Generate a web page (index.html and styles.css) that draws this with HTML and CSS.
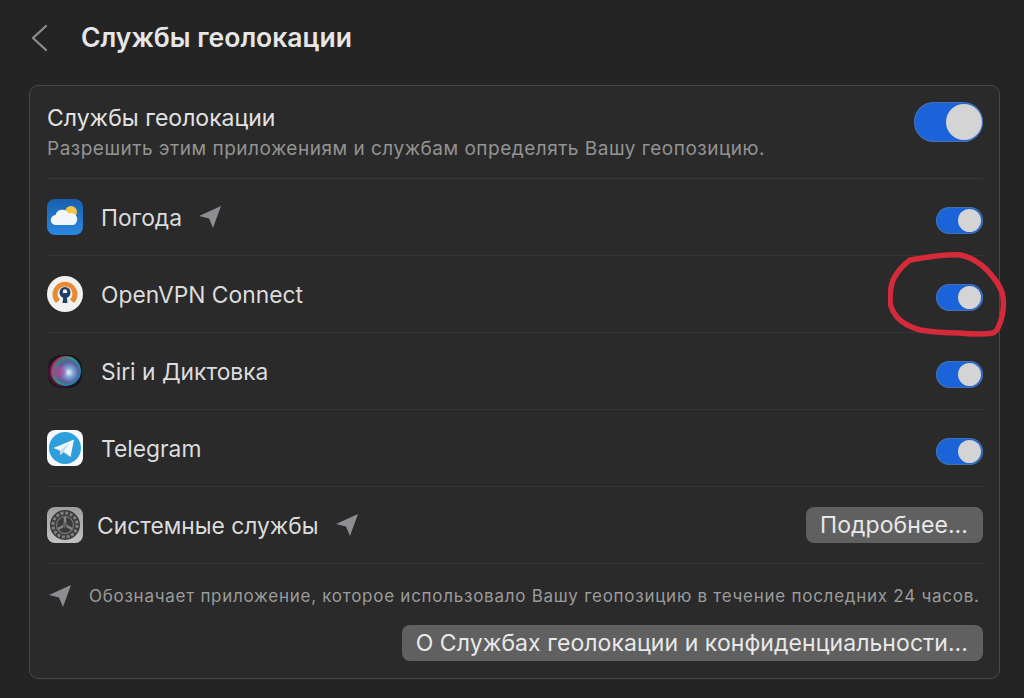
FILE: index.html
```html
<!DOCTYPE html>
<html lang="ru">
<head>
<meta charset="utf-8">
<title>Службы геолокации</title>
<link rel="stylesheet" href="styles.css">
</head>
<body>
<header class="topbar">
  <svg class="back" viewBox="0 0 18 28" width="18" height="28"><path d="M16 2 L3 14 L16 26" fill="none" stroke="#8e8e8e" stroke-width="2.2" stroke-linecap="round" stroke-linejoin="round"/></svg>
  <h1 class="title">Службы геолокации</h1>
</header>
<main class="card">
  <section class="row row-head">
    <div class="head-text">
      <div class="head-title">Службы геолокации</div>
      <div class="head-sub">Разрешить этим приложениям и службам определять Вашу геопозицию.</div>
    </div>
    <span class="toggle toggle-lg"><span class="knob"></span></span>
  </section>
  <section class="row">
    <svg class="app-icon" viewBox="0 0 36 36" width="36" height="36">
      <defs><linearGradient id="sky" x1="0" y1="0" x2="0" y2="1"><stop offset="0" stop-color="#1a5fae"/><stop offset="1" stop-color="#2a88e0"/></linearGradient></defs>
      <rect width="36" height="36" rx="8" fill="url(#sky)"/>
      <circle cx="24" cy="13" r="6" fill="#f3c84a"/>
      <path d="M9 26 a5 5 0 0 1 -.5 -10 a7 7 0 0 1 13 -1.500 a5.500 5.500 0 0 1 5 11.500 z" fill="#f2f6fb"/>
    </svg>
    <span class="label">Погода</span>
    <svg class="arrow" viewBox="0 0 24 24" width="24" height="24"><path d="M23 1 L1 11 L11 13.500 L15 23 Z" fill="#8d8d92"/></svg>
    <span class="toggle"><span class="knob"></span></span>
  </section>
  <section class="row">
    <svg class="app-icon" viewBox="0 0 36 36" width="36" height="36">
      <circle cx="18" cy="18" r="18" fill="#f1f1ef"/>
      <path d="M9 27 A12.500 12.500 0 1 1 27 27 L23 23.500 A7.500 7.500 0 1 0 13 23.500 Z" fill="#e88a34"/>
      <circle cx="18" cy="16.500" r="5.500" fill="#1f3f66"/>
      <circle cx="18" cy="15.500" r="2.200" fill="#f1f1ef"/>
      <path d="M16.800 17 h2.400 l1.300 10 h-5 z" fill="#1f3f66"/>
    </svg>
    <span class="label">OpenVPN Connect</span>
    <span class="toggle"><span class="knob"></span></span>
  </section>
  <section class="row">
    <svg class="app-icon" viewBox="0 0 36 36" width="36" height="36">
      <defs>
        <radialGradient id="siri" cx="0.6" cy="0.55" r="0.55"><stop offset="0" stop-color="#eef2fa"/><stop offset="0.3" stop-color="#7fa8d8"/><stop offset="0.65" stop-color="#5a5f9c"/><stop offset="1" stop-color="#3f7f78"/></radialGradient>
        <linearGradient id="siriEdge" x1="0" y1="0.2" x2="1" y2="0.8"><stop offset="0" stop-color="#c81e66"/><stop offset="0.45" stop-color="#2f9a86"/><stop offset="1" stop-color="#1f78c8"/></linearGradient>
        <filter id="siriBlur"><feGaussianBlur stdDeviation="1.500"/></filter>
      </defs>
      <rect x="1" y="2" width="34" height="33" rx="13" fill="#15171c"/>
      <circle cx="16" cy="19" r="14" fill="#8f1450" filter="url(#siriBlur)" opacity=".8"/>
      <circle cx="19" cy="18" r="14" fill="url(#siri)" stroke="url(#siriEdge)" stroke-width="2"/>
      <circle cx="12" cy="19" r="6.500" fill="#c23a90" opacity=".55" filter="url(#siriBlur)"/>
    </svg>
    <span class="label">Siri и Диктовка</span>
    <span class="toggle"><span class="knob"></span></span>
  </section>
  <section class="row">
    <svg class="app-icon" viewBox="0 0 36 36" width="36" height="36">
      <rect width="36" height="36" rx="8" fill="#f6f8fa"/>
      <circle cx="18" cy="18" r="16" fill="#2f9fdc"/>
      <path d="M6.500 18 L27 9.500 L23.500 27 L16.500 22 L13.500 25 L12.800 20.500 Z" fill="#f4f9fd"/>
      <path d="M12.800 20.500 L23 12.500 L16.500 22 L13.500 25 Z" fill="#c5dff0"/>
    </svg>
    <span class="label">Telegram</span>
    <span class="toggle"><span class="knob"></span></span>
  </section>
  <section class="row">
    <svg class="app-icon" viewBox="0 0 36 36" width="36" height="36">
      <defs><linearGradient id="gear" x1="0" y1="0" x2="0" y2="1"><stop offset="0" stop-color="#9e9e9e"/><stop offset="1" stop-color="#c2c2c2"/></linearGradient></defs>
      <rect width="36" height="36" rx="8" fill="url(#gear)"/>
      <circle cx="18" cy="18" r="15" fill="#3a3a3a"/>
      <circle cx="18" cy="18" r="12" fill="none" stroke="#7f7f7f" stroke-width="3" stroke-dasharray="3 1.700"/>
      <circle cx="18" cy="18" r="8.500" fill="none" stroke="#6f6f6f" stroke-width="1.500"/>
      <path d="M18 18 V10 M18 18 L11 22 M18 18 L25 22" stroke="#858585" stroke-width="2.500" fill="none"/>
      <circle cx="18" cy="18" r="2.500" fill="#5f5f5f"/>
    </svg>
    <span class="label label-tight">Системные службы</span>
    <svg class="arrow" viewBox="0 0 24 24" width="24" height="24"><path d="M23 1 L1 11 L11 13.500 L15 23 Z" fill="#8d8d92"/></svg>
    <button class="btn">Подробнее...</button>
  </section>
  <section class="foot">
    <div class="note">
      <svg class="note-arrow" viewBox="0 0 24 24" width="24" height="24"><path d="M23 1 L1 11 L11 13.500 L15 23 Z" fill="#8d8d92"/></svg>
      <span>Обозначает приложение, которое использовало Вашу геопозицию в течение последних 24 часов.</span>
    </div>
    <div class="foot-action"><button class="btn">О Службах геолокации и конфиденциальности...</button></div>
  </section>
</main>
<svg class="scribble" viewBox="0 0 120 86" width="120" height="86"><path d="M22 8 C40 5 56 2 72 3 C84 5 92 11 99 18 C108 28 114 36 115 45 C116 56 114 66 112 71 C110 77 108 80 105 81 C94 83 84 82 72 81 C58 81 44 80 32 78 C22 75 14 71 9 65 C4 59 2 54 2 48 C2 40 3 34 5 28 C9 20 15 13 22 8" fill="none" stroke="#d42a3a" stroke-width="5.500" stroke-linecap="round"/></svg>
</body>
</html>
```
FILE: styles.css
```css
* { box-sizing: border-box; }
html, body { height: 100%; }
body {
  margin: 0;
  padding: 0 24px 19px 29px;
  background: #242424;
  color: #e4e4e4;
  font-family: Inter, "Noto Sans", sans-serif;
  position: relative;
  overflow: hidden;
  display: flex;
  flex-direction: column;
}
.topbar {
  height: 85px;
  flex: none;
  display: flex;
  align-items: center;
  padding: 0 0 10px 1px;
}
.back { flex: none; }
.title {
  margin: 0 0 2px 33px;
  font-size: 26.5px;
  font-weight: 600;
  color: #e6e6e6;
}
.card {
  flex: 1;
  border: 1.5px solid #484848;
  border-radius: 9px;
  background: #2a2a2a;
  padding: 0 16px 0 17px;
  display: flex;
  flex-direction: column;
}
.row {
  height: 77px;
  flex: none;
  display: flex;
  align-items: center;
  border-bottom: 1px solid #363636;
}
.row-head { height: 93px; padding-top: 2px; }
.head-text { flex: 1; }
.head-title { font-size: 23px; line-height: 30px; color: #e2e2e2; }
.head-sub { font-size: 19px; line-height: 31px; color: #939393; letter-spacing: .5px; white-space: nowrap; }
.app-icon { flex: none; margin-right: 18px; }
.label { font-size: 22.8px; color: #dcdcdc; }
.label-tight { margin-left: -4px; }
.arrow { flex: none; margin-left: 16px; }
.toggle {
  margin-left: auto;
  margin-top: 7px;
  width: 47px;
  height: 27px;
  flex: none;
  border-radius: 14px;
  background: #1a63d8;
  box-shadow: inset 0 0 0 1px #4a6fae;
  display: flex;
  align-items: center;
  justify-content: flex-end;
  padding-right: 2px;
}
.knob {
  width: 23px;
  height: 23px;
  border-radius: 50%;
  background: #d4d4d4;
}
.toggle-lg { width: 69px; height: 40px; border-radius: 20px; padding-right: 1px; margin: 0 0 22px auto; }
.toggle-lg .knob { width: 36px; height: 36px; }
.btn {
  margin-left: auto;
  height: 36px;
  padding: 0 15px 0 14px;
  border: 0;
  border-radius: 8px;
  background: #606060;
  color: #e8e8e8;
  font: 23px Inter, "Noto Sans", sans-serif;
  letter-spacing: .07px;
  white-space: nowrap;
}
.foot { flex: 1; display: flex; flex-direction: column; }
.note {
  display: flex;
  align-items: center;
  height: 58px;
  margin-top: 3px;
  padding-left: 1px;
  color: #9b9b9b;
  font-size: 17px;
  letter-spacing: .74px;
  white-space: nowrap;
}
.note-arrow { flex: none; margin-right: 17px; }
.foot-action { display: flex; justify-content: flex-end; }
.scribble { position: absolute; left: 888px; top: 252px; }
```
